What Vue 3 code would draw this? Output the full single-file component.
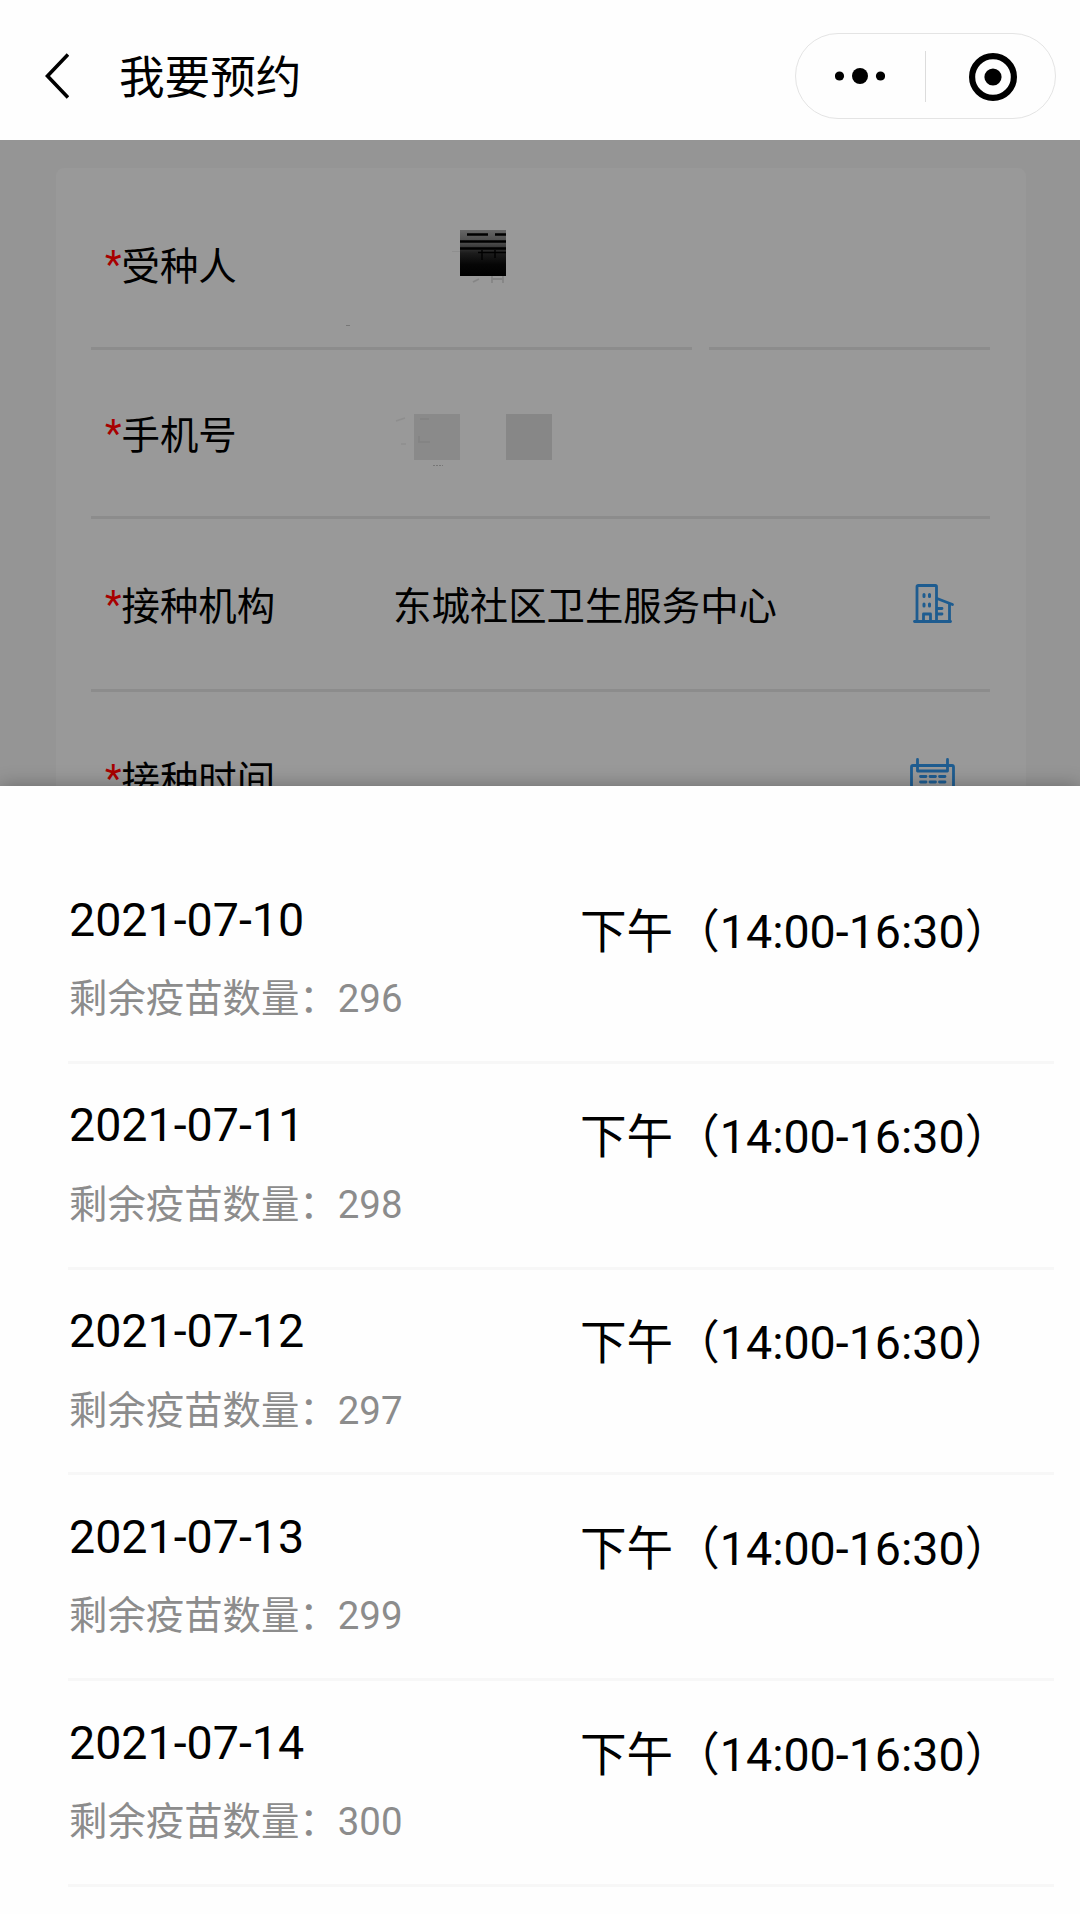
<template>
  <div class="page">
    <header class="navbar">
      <svg class="back" width="24" height="46" viewBox="0 0 24 46" fill="none" stroke="#000" stroke-width="3.6">
        <path d="M23 1.5 L2.5 23 L23 44.5" />
      </svg>
      <h1 class="title">我要预约</h1>
      <div class="capsule">
        <svg class="dots" width="50" height="16" viewBox="0 0 50 16">
          <circle cx="4.5" cy="8" r="4.6" />
          <circle cx="25" cy="8" r="8" />
          <circle cx="45.5" cy="8" r="4.6" />
        </svg>
        <span class="divider"></span>
        <svg class="target" width="48" height="48" viewBox="0 0 48 48">
          <circle cx="24" cy="24" r="20.9" fill="none" stroke="#000" stroke-width="6.2" />
          <circle cx="24" cy="24" r="8.6" />
        </svg>
      </div>
    </header>

    <main class="backdrop">
      <section class="card">
        <div v-for="f in fields" :key="f.key" class="field" :class="f.key">
          <span class="label"><i>*</i>{{ f.label }}</span>
          <span class="value">{{ f.value }}</span>

          <svg v-if="f.key === 'person'" class="mosaic" width="90" height="120" viewBox="440 225 90 120">
            <defs>
              <linearGradient id="ink" x1="0" y1="0" x2="0" y2="1">
                <stop offset="0" stop-color="#666" />
                <stop offset=".3" stop-color="#484848" />
                <stop offset=".5" stop-color="#1c1c1c" />
                <stop offset=".75" stop-color="#060606" />
                <stop offset="1" stop-color="#000" />
              </linearGradient>
            </defs>
            <rect x="460" y="230" width="46" height="46" fill="url(#ink)" />
            <path d="M467 234.5h21M495 234.5h11M460 241.5h46M460 248.5h46" stroke="#000" stroke-width="2.6" />
            <path d="M478 252.5h28M482 250v10M495 250v8" stroke="#000" stroke-width="1.4" />
            <path d="M452 251.5h8" stroke="#8f8f8f" />
            <path d="M473 282l6-3M492 276v7M503 276v7M492 279h11" stroke="#858585" stroke-width="1.8" fill="none" />
          </svg>
          <span v-if="f.key === 'person'" class="speck"></span>

          <svg v-if="f.key === 'phone'" class="mosaic" width="190" height="70" viewBox="390 405 190 70">
            <rect x="414" y="414" width="46" height="46" fill="#8a8a8a" />
            <rect x="506" y="414" width="46" height="46" fill="#878787" />
            <path d="M420 419h9M418 442h12M419 436v6" stroke="#838383" stroke-width="1.5" fill="none" />
            <path d="M396 421l9-3M401 444h5" stroke="#8e8e8e" stroke-width="1.5" />
            <path d="M433 465.5h10" stroke="#777" stroke-dasharray="2 1" />
          </svg>

          <svg v-if="f.key === 'clinic'" class="icon building" width="42" height="42" viewBox="0 0 42 42">
            <path d="M4 37V3.7q0-1.2 1.2-1.2h17.1q1.2 0 1.2 1.2V37" />
            <path d="M1.5 38.500h36" />
            <path d="M24 15.500l15.500 6M36.500 21v17" />
            <path d="M10.500 38v-7h7v7" />
            <path d="M11 11.500v2M16.500 11.500v2M11 21v2M16.500 21v2" stroke-width="3" />
            <path d="M25 25.500h4M25 31h4" />
          </svg>

          <svg v-if="f.key === 'time'" class="icon calendar" width="46" height="46" viewBox="0 0 46 46">
            <path d="M6 7.500H3q-1.500 0-1.500 1.500v34q0 1.500 1.500 1.500h39q1.500 0 1.500-1.500V9q0-1.500-1.500-1.500h-3" />
            <path d="M7.500 1.500v11.500h30V1.500M7.500 7.500h30" />
            <path d="M10.500 18.500h5.500M20 18.500h5.500M29.500 18.500h5.500M10.500 24h5.500M20 24h5.500M29.500 24h5.500" />
          </svg>
        </div>
      </section>
    </main>

    <section class="sheet">
      <div v-for="slot in slots" :key="slot.date" class="slot">
        <div class="day">
          <div class="date">{{ slot.date }}</div>
          <div class="stock">剩余疫苗数量：{{ slot.left }}</div>
        </div>
        <div class="period">下午（14:00-16:30）</div>
      </div>
    </section>
  </div>
</template>

<script setup>
const fields = [
  { key: 'person', label: '受种人', value: '' },
  { key: 'phone', label: '手机号', value: '' },
  { key: 'clinic', label: '接种机构', value: '东城社区卫生服务中心' },
  { key: 'time', label: '接种时间', value: '' },
]

const slots = [
  { date: '2021-07-10', left: 296 },
  { date: '2021-07-11', left: 298 },
  { date: '2021-07-12', left: 297 },
  { date: '2021-07-13', left: 299 },
  { date: '2021-07-14', left: 300 },
]
</script>

<style>
body { margin: 0; background: #fefefe; }
</style>

<style scoped>
.page {
  width: 1080px; height: 1914px; overflow: hidden;
  display: flex; flex-direction: column;
  background: #fefefe; color: #000;
  font-family: Roboto, "Noto Sans CJK SC", sans-serif;
}

.navbar {
  flex: none; height: 140px; box-sizing: border-box;
  display: flex; align-items: center;
  padding: 12px 24px 0 45px;
}
.back { flex: none; }
.title { margin: 5px 0 0 50px; font-size: 45.6px; font-weight: 400; line-height: 60px; }
.capsule {
  margin-left: auto; width: 261px; height: 86px; box-sizing: border-box;
  border: 1px solid #e4e4e4; border-radius: 43px;
  display: flex; align-items: center;
}
.dots { margin-left: 39px; }
.divider { width: 1px; height: 51px; margin-left: 40px; background: #dcdcdc; }
.target { margin: 2px 0 0 43px; }

.backdrop { flex: none; height: 646px; overflow: hidden; background: #959595; }
.card {
  margin: 28px 54px 0 56px; padding: 0 36px 0 35px; height: 700px;
  background: #999; border-radius: 8px;
}
.field {
  position: relative; box-sizing: border-box;
  display: flex; padding: 0 0 0 14px;
  border-bottom: 3px solid #8c8c8c;
  font-size: 38.4px; line-height: 56px;
}
.person { height: 182px; padding-top: 71px; }
.phone { height: 169px; padding-top: 58px; }
.clinic { height: 173px; padding-top: 60px; }
.time { height: 173px; padding-top: 61px; }
.label { width: 288px; white-space: nowrap; }
.label i { position: relative; top: -2px; font-style: normal; color: #a80000; }
.value { flex: 1; white-space: nowrap; }

/* break in the first rule */
.person::after {
  content: ''; position: absolute; left: 601px; bottom: -3px;
  width: 17px; height: 3px; background: #999;
}
.mosaic { position: absolute; }
.person .mosaic { left: 349px; top: 57px; }
.phone .mosaic { left: 299px; top: 55px; }
.speck { position: absolute; left: 255px; top: 157px; width: 4px; height: 1px; background: #777; }

.icon { flex: none; fill: none; stroke: #1e5c90; stroke-width: 2.8; stroke-linecap: round; stroke-linejoin: round; }
.building { margin: 4px 35px 0 0; }
.calendar { margin: 5px 34px 0 0; }

.sheet {
  flex: 1; position: relative; box-sizing: border-box;
  padding: 72px 26px 0 68px; background: #fefefe;
  box-shadow: 0 0 18px rgba(0, 0, 0, .3);
}
.slot {
  height: 205.8px; box-sizing: border-box;
  display: flex; padding-left: 1px;
  border-bottom: 3px solid #f7f7f7;
}
.day { width: 511px; padding-top: 31.5px; }
.date { font-size: 46.6px; line-height: 60px; }
.stock { margin-top: 21.5px; font-size: 38.4px; line-height: 56px; color: #8c8c8c; white-space: nowrap; }
.period { padding-top: 43.5px; font-size: 46.6px; line-height: 60px; white-space: nowrap; }
</style>
